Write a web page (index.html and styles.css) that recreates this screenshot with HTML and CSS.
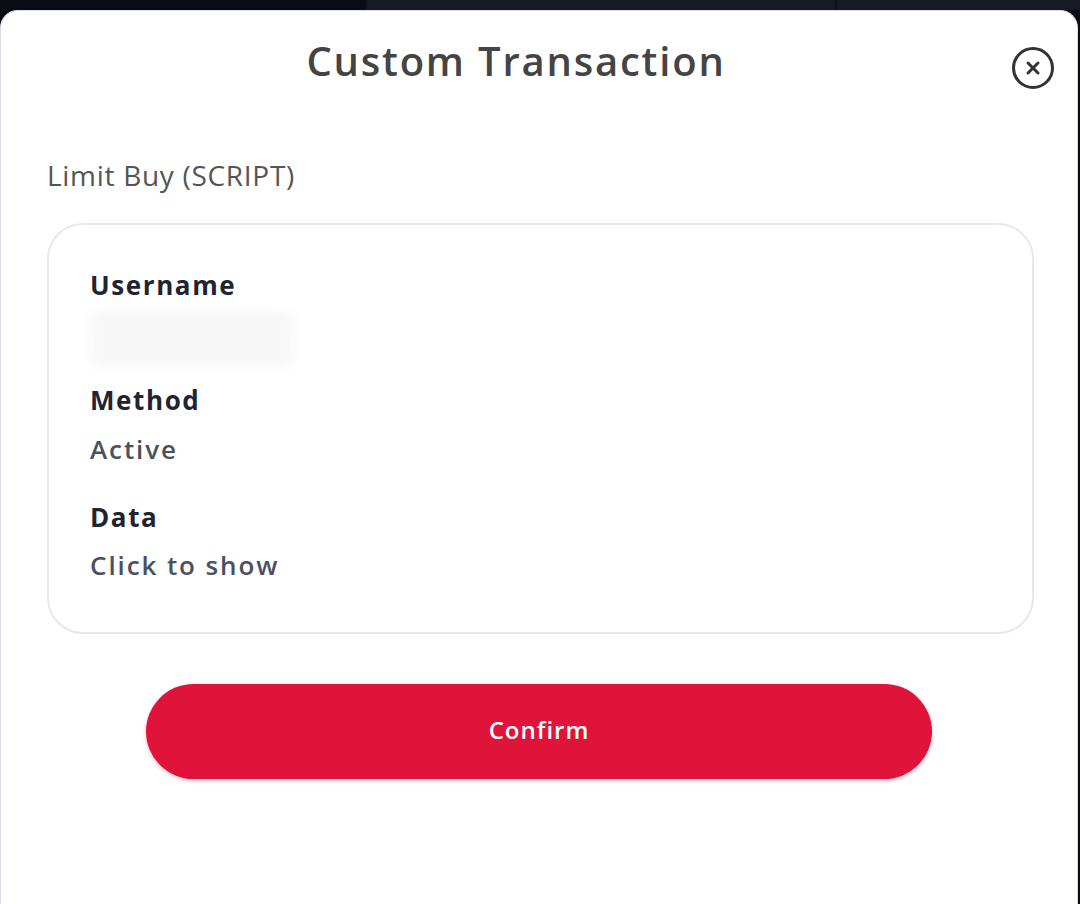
FILE: index.html
```html
<!DOCTYPE html>
<html lang="en">
<head>
<meta charset="utf-8">
<title>Custom Transaction</title>
<link rel="stylesheet" href="styles.css">
</head>
<body>
<div class="topbar">
  <div class="seg seg-a"></div>
  <div class="seg seg-b"></div>
  <div class="seg seg-c"></div>
</div>
<div class="modal">
  <div class="header">
    <h1 class="title">Custom Transaction</h1>
    <button class="close" aria-label="Close">
      <svg width="44" height="44" viewBox="0 0 44 44">
        <circle cx="22" cy="22" r="19.5" fill="none" stroke="#333" stroke-width="3"/>
        <path d="M17 17 L27 27 M27 17 L17 27" stroke="#333" stroke-width="3" stroke-linecap="round"/>
      </svg>
    </button>
  </div>
  <p class="subtitle">Limit Buy (SCRIPT)</p>
  <div class="card">
    <div class="label">Username</div>
    <div class="blurred"></div>
    <div class="label label-gap">Method</div>
    <div class="value">Active</div>
    <div class="label label-gap2">Data</div>
    <div class="value value-last">Click to show</div>
  </div>
  <div class="actions">
    <button class="confirm">Confirm</button>
  </div>
</div>
</body>
</html>
```

FILE: styles.css
```css
* { box-sizing: border-box; }
html, body {
  margin: 0;
  padding: 0;
  background: #0a0d14;
  font-family: "Open Sans", "Noto Sans", sans-serif;
  height: 904px;
  overflow: hidden;
}
.topbar {
  display: flex;
  height: 10px;
}
.seg-a { width: 365px; background: #090c13; }
.seg-b { width: 470px; background: #171b22; border-left: 2px solid #0d1016; }
.seg-c { flex: 1; background: #171b22; border-left: 2px solid #0d1016; }
.modal {
  position: relative;
  width: 1078px;
  height: 894px;
  background: #ffffff;
  border: 1px solid #d9dee5;
  border-bottom: none;
  border-radius: 18px 18px 0 0;
}
.header {
  padding: 26px 46px 0 0;
}
.title {
  margin: 0;
  text-align: center;
  font-size: 40px;
  line-height: 48px;
  font-weight: 600;
  letter-spacing: 1.8px;
  color: #444444;
}
.close {
  position: absolute;
  top: 35px;
  right: 22px;
  width: 44px;
  height: 44px;
  padding: 0;
  border: none;
  background: none;
  display: flex;
}
.subtitle {
  margin: 70px 0 0 46px;
  font-size: 28px;
  line-height: 40px;
  font-weight: 400;
  letter-spacing: 0.7px;
  color: #555555;
}
.card {
  margin: 28px 0 0 46px;
  width: 987px;
  border: 2px solid #e6e8ec;
  border-radius: 36px;
  padding: 42px 41px 49px;
}
.label {
  font-size: 26px;
  line-height: 36px;
  font-weight: 700;
  letter-spacing: 1.6px;
  color: #1f2433;
}
.label-gap { margin-top: 15px; }
.label-gap2 { margin-top: 32px; }
.value {
  margin-top: 13px;
  font-size: 26px;
  line-height: 36px;
  font-weight: 600;
  letter-spacing: 1.9px;
  color: #4b5060;
}
.value-last { margin-top: 12px; }
.blurred {
  margin-top: 8px;
  width: 204px;
  height: 56px;
  background: #f7f7f8;
  border-radius: 10px;
  filter: blur(6px);
}
.actions {
  display: flex;
  justify-content: center;
  margin-top: 50px;
}
.confirm {
  width: 786px;
  height: 95px;
  border: none;
  border-radius: 48px;
  background: #e0143a;
  color: #ffffff;
  font-family: "Open Sans", "Noto Sans", sans-serif;
  font-size: 24px;
  font-weight: 600;
  letter-spacing: 1px;
  padding: 0 0 5px;
  box-shadow: 0 2px 4px rgba(224, 20, 58, 0.25);
}
```
